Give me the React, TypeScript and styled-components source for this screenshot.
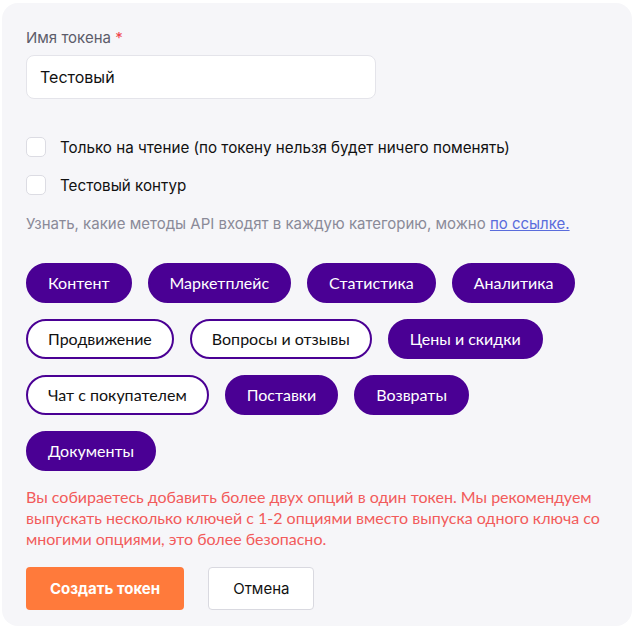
import React, { useState } from "react";
import styled, { createGlobalStyle } from "styled-components";

const Global = createGlobalStyle`
  html, body { margin: 0; padding: 0; background: #ffffff; }
  body { font-family: Inter, "Noto Sans", sans-serif; }
  * { box-sizing: border-box; }
`;

const Page = styled.div`
  padding: 3px 2px 2px 2px;
`;

const Card = styled.div`
  background: #f6f6f9;
  border-radius: 16px;
  width: 630px;
  min-height: 623px;
  padding: 24px 24px 16px 24px;
  display: flex;
  flex-direction: column;
`;

const Label = styled.label`
  font-size: 15px;
  line-height: 22px;
  color: #5c5c6a;
  margin-bottom: 6px;
  span { color: #f0444a; }
`;

const Input = styled.input`
  width: 350px;
  height: 44px;
  border: 1px solid #e4e4ea;
  border-radius: 8px;
  background: #fff;
  padding: 0 13px;
  font-family: Inter, sans-serif;
  font-size: 16px;
  color: #111;
  outline: none;
`;

const Checks = styled.div`
  margin-top: 36px;
  display: flex;
  flex-direction: column;
  gap: 14px;
`;

const CheckRow = styled.label`
  display: flex;
  align-items: center;
  height: 24px;
  gap: 14px;
  font-size: 15.2px;
  color: #111;
  cursor: pointer;
`;

const Box = styled.span<{ $on: boolean }>`
  width: 20px;
  height: 20px;
  border: 1px solid #dcdce3;
  border-radius: 5px;
  background: ${(p) => (p.$on ? "#4a0094" : "#fff")};
  flex: none;
`;

const Hint = styled.p`
  margin: 16px 0 0 0;
  font-size: 15px;
  line-height: 22px;
  color: #8a8a98;
  a { color: #5a6cdc; text-decoration: underline; }
`;

const Pills = styled.div`
  margin-top: 28px;
  display: flex;
  flex-wrap: wrap;
  gap: 16px 16px;
  width: 560px;
`;

const Pill = styled.button<{ $on: boolean }>`
  height: 40px;
  border-radius: 20px;
  padding: 0 20px 1px 20px;
  font-family: Lato, sans-serif;
  font-size: 16px;
  cursor: pointer;
  border: 2px solid #4a0094;
  background: ${(p) => (p.$on ? "#4a0094" : "#ffffff")};
  color: ${(p) => (p.$on ? "#ffffff" : "#111111")};
`;

const Warning = styled.p`
  margin: 15px 0 0 0;
  font-family: Lato, sans-serif;
  font-size: 16px;
  line-height: 21px;
  color: #f25b5b;
`;

const Actions = styled.div`
  margin-top: 18px;
  display: flex;
  gap: 24px;
`;

const Primary = styled.button`
  height: 43px;
  padding: 0 24px;
  border: none;
  border-radius: 4px;
  background: #ff7a3b;
  color: #fff;
  font-family: Inter, sans-serif;
  font-weight: 700;
  font-size: 15px;
`;

const Secondary = styled.button`
  height: 43px;
  padding: 0 24px;
  border: 1px solid #d9d9e0;
  border-radius: 4px;
  background: #fff;
  color: #111;
  font-family: Inter, sans-serif;
  font-size: 15px;
`;

const categories: { name: string; on: boolean }[] = [
  { name: "Контент", on: true },
  { name: "Маркетплейс", on: true },
  { name: "Статистика", on: true },
  { name: "Аналитика", on: true },
  { name: "Продвижение", on: false },
  { name: "Вопросы и отзывы", on: false },
  { name: "Цены и скидки", on: true },
  { name: "Чат с покупателем", on: false },
  { name: "Поставки", on: true },
  { name: "Возвраты", on: true },
  { name: "Документы", on: true },
];

export default function App() {
  const [sel, setSel] = useState(categories.map((c) => c.on));
  const [checks, setChecks] = useState([false, false]);
  const [name, setName] = useState("Тестовый");
  return (
    <>
      <Global />
      <Page>
        <Card>
          <Label>
            Имя токена <span>*</span>
          </Label>
          <Input value={name} onChange={(e) => setName(e.target.value)} />
          <Checks>
            {["Только на чтение (по токену нельзя будет ничего поменять)", "Тестовый контур"].map((t, i) => (
              <CheckRow key={t} onClick={() => setChecks(checks.map((c, j) => (j === i ? !c : c)))}>
                <Box $on={checks[i]} />
                {t}
              </CheckRow>
            ))}
          </Checks>
          <Hint>
            Узнать, какие методы API входят в каждую категорию, можно <a href="#">по ссылке.</a>
          </Hint>
          <Pills>
            {categories.map((c, i) => (
              <Pill key={c.name} $on={sel[i]} onClick={() => setSel(sel.map((s, j) => (j === i ? !s : s)))}>
                {c.name}
              </Pill>
            ))}
          </Pills>
          <Warning>
            Вы собираетесь добавить более двух опций в один токен. Мы рекомендуем
            <br />
            выпускать несколько ключей с 1-2 опциями вместо выпуска одного ключа со многими опциями, это более
            безопасно.
          </Warning>
          <Actions>
            <Primary>Создать токен</Primary>
            <Secondary>Отмена</Secondary>
          </Actions>
        </Card>
      </Page>
    </>
  );
}
